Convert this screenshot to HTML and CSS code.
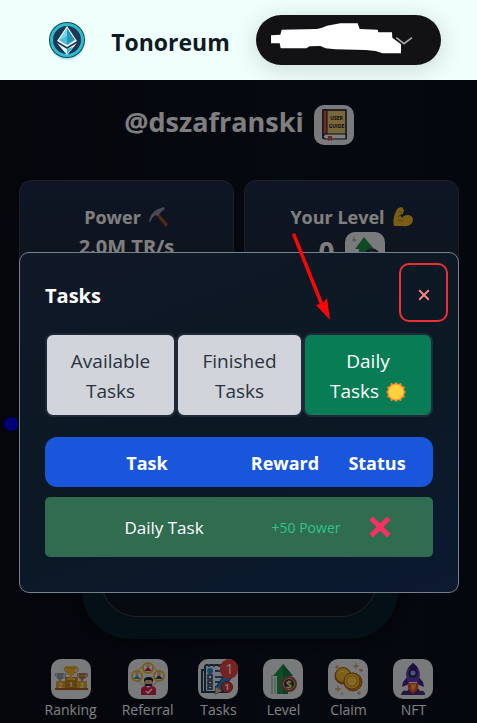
FILE: index.html
```html
<!DOCTYPE html>
<html lang="en">
<head>
<meta charset="utf-8">
<meta name="viewport" content="width=device-width, initial-scale=1">
<title>Tonoreum</title>
<link rel="stylesheet" href="styles.css">
</head>
<body>
<header class="topbar">
  <svg class="logo" viewBox="0 0 36 40" aria-hidden="true">
    <circle cx="18" cy="21" r="17" fill="#b9e9ee"/>
    <circle cx="18" cy="18" r="18" fill="#16425c"/>
    <circle cx="18" cy="18" r="15.5" fill="none" stroke="#2dbdca" stroke-width="3"/>
    <circle cx="18" cy="18" r="13.5" fill="#1b3656"/>
    <path d="M18 4 8 19l10 6 10-6z" fill="#eefcff"/>
    <path d="M18 6v17l-8-5z" fill="#73d8ea"/>
    <path d="M18 6v17l8-5z" fill="#2493b6"/>
    <path d="M18 14v9l-8-5z" fill="#48bfd6"/>
    <path d="M8 21l10 6 10-6-10 12z" fill="#e5f9fc"/>
    <path d="M18 27v5l6-7z" fill="#38b2c9"/>
  </svg>
  <h1 class="brand">Tonoreum</h1>
  <button class="wallet" type="button" aria-label="Wallet">
    <svg viewBox="57 44 555 150" aria-hidden="true">
      <path d="M478 112l23 18 24-18" fill="none" stroke="#a7a7a9" stroke-width="5"/>
      <path d="M102 105l28-2 4-15 106-2 15-4 15-6 40-7h52l6 17 54 2 2 8h41l1 16 26 20v27h-56l-20-7-30-3-91-2-29-3-16-7-32 1-10 6h-77l-3-15h-26z" fill="#fff"/>
    </svg>
  </button>
</header>

<main class="game">
  <div class="user">
    <h2>@dszafranski</h2>
    <a class="tile" href="#guide" aria-label="User guide">
      <svg viewBox="0 0 40 40">
        <path d="M9 5h23v28H9z" fill="#f0d078" stroke="#171b2a" stroke-width="1.5"/>
        <path d="M9 5h4v25H9z" fill="#e05858" stroke="#171b2a"/>
        <path d="M11 29h21v5H11q-4-2 0-5" fill="#fff" stroke="#171b2a" stroke-width="1.2"/>
        <path d="M14 31h4v5l-2-1-2 1z" fill="#e04b59"/>
        <text x="22.500" y="15" class="book-text">USER</text>
        <text x="22.500" y="23" class="book-text">GUIDE</text>
      </svg>
    </a>
  </div>

  <section class="stats">
    <article class="stat">
      <h3>Power
        <svg class="emoji" viewBox="0 0 20 20" aria-hidden="true">
          <path d="M9 6l10 11-2 3L7 8z" fill="#a84e25"/>
          <path d="M0 15C1 7 6 2 15 0l1 2-4 3-3 4-2-1-3 2-3 5z" fill="#9a8fa9"/>
        </svg>
      </h3>
      <p>2.0M TR/s</p>
    </article>
    <article class="stat">
      <h3>Your Level
        <svg class="emoji" viewBox="0 0 20 20" aria-hidden="true">
          <path d="M5 1l4-1 2 3-1 4-3 1 2 3c2-4 10-4 11 1 0 5-4 8-10 7H1C-1 14 2 5 5 1z" fill="#f1bd29"/>
          <path d="M6 4l3 2M7 8l-2 3M5 13l5 1" fill="none" stroke="#bd8119"/>
        </svg>
      </h3>
      <p class="level">0
        <span class="tile">
          <svg viewBox="0 0 40 40">
            <path d="M19 5l10 12h-5v17H14V17h-4z" fill="#1f9448"/>
            <circle cx="27" cy="25" r="7" fill="#e8bd62" stroke="#253057" stroke-width="3"/>
            <path d="M9 5v5M7 8h5" stroke="#98a8a0"/>
          </svg>
        </span>
      </p>
    </article>
  </section>

  <div class="miner">
    <div class="miner-core"></div>
    <span class="orb"></span>
  </div>

  <nav class="menu" aria-label="Game">
    <a href="#ranking"><span class="tile">
      <svg viewBox="0 0 40 40">
        <path d="M5 22h9v-4h13v4h9v8H5z" fill="#e5a82f"/>
        <path d="M14 18h12v12H14z" fill="#c98621"/>
        <path d="M4 29h33v2H4z" fill="#ae651c"/>
        <path d="M14 7h12l-2 7q-2 3-3 3v2h3v2h-8v-2h3v-2q-3-1-4-5z" fill="#f5bf34"/>
        <path d="M13 9h14q0 5-4 5m-6 0q-4-1-4-5" fill="none" stroke="#dc9a20"/>
        <path d="M6 14h7l-1 5-2 2v1H8v-1l-2-2z" fill="#9da4ad"/><path d="M4 15h11q-1 4-4 4H8q-3 0-4-4" fill="none" stroke="#8c939c"/>
        <path d="M28 14h7l-1 5-2 2v1h-2v-1l-2-2z" fill="#c98a66"/><path d="M26 15h11q-1 4-4 4h-3q-3 0-4-4" fill="none" stroke="#a66543"/>
        <text x="9.500" y="29" class="podium">2</text><text x="20" y="28" class="podium">1</text><text x="31" y="29" class="podium">3</text>
      </svg></span>Ranking</a>
    <a href="#referral"><span class="tile">
      <svg viewBox="0 0 40 40">
        <path d="M10 14q1-7 10-8 8 1 10 8M10 22l5 4m15-4-4 4" fill="none" stroke="#e6b23b"/>
        <g fill="#fff" stroke="#eeb92e" stroke-width="2"><circle cx="20" cy="9" r="5"/><circle cx="9" cy="17" r="5"/><circle cx="31" cy="17" r="5"/></g>
        <g fill="#e7b08c"><circle cx="20" cy="7" r="2"/><circle cx="9" cy="15" r="2"/><circle cx="31" cy="15" r="2"/><path d="M16 20h9v7h-9z"/></g>
        <path d="M16.500 12q3.500-7 7 0z" fill="#c91b48"/><path d="M5.500 20q3.500-7 7 0z" fill="#2aa7bd"/><path d="M27.500 20q3.500-7 7 0z" fill="#24436d"/>
        <path d="M16 23q-1-5 5-5 5 0 4 5l-2-2h-5z" fill="#17203d"/><path d="M17 25h7v2h-7z" fill="#242745"/>
        <path d="M13 36v-6q1-3 5-3l2 2 3-2q4 0 5 3v6z" fill="#dd234f"/><path d="M18 32l2 2 4-4" fill="none" stroke="#fff" stroke-width="1.500"/>
      </svg></span>Referral</a>
    <a href="#tasks"><span class="tile">
      <svg viewBox="0 0 40 40">
        <rect x="7" y="6" width="23" height="27" rx="2" fill="#e7f2fa" stroke="#23405f" stroke-width="2"/>
        <path d="M6 11H4v22h17" fill="none" stroke="#23405f" stroke-width="2"/>
        <path d="M11 5v3m5-3v3m5-3v3m5-3v3M17 12h9M17 18h9M17 23h7M17 28h4" stroke="#3d6587" stroke-width="2"/>
        <circle cx="12" cy="12" r="3" fill="#2491ce"/><path d="M10 16h4v4h-4zM10 22h4v3h-4zM10 27h4v3h-4z" fill="#fff" stroke="#23405f" stroke-width="1.5"/>
        <path d="M18 28l9-13 6 4-9 13-7 3z" fill="#278acb" stroke="#1d426c"/><path d="M18 28l6 4-7 3z" fill="#f2c182"/>
        <circle cx="29" cy="28" r="5.500" fill="#e13c3f" stroke="#8f2632"/><text x="29" y="31" class="small-one">1</text>
      </svg><b class="badge">1</b></span>Tasks</a>
    <a href="#level"><span class="tile">
      <svg viewBox="0 0 40 40">
        <path d="M9 16v19M12 19v16" stroke="#75b58a"/>
        <path d="M20 5l10 12h-5v18H14V17h-4z" fill="#239750"/><path d="M20 5l10 12h-5v18h-5z" fill="#177b41"/>
        <circle cx="26" cy="25" r="7" fill="#243353" stroke="#a94c3a" stroke-width="2"/><circle cx="26" cy="25" r="5.500" fill="none" stroke="#edc16a"/><text x="26" y="29" class="dollar">$</text>
      </svg></span>Level</a>
    <a href="#claim"><span class="tile">
      <svg viewBox="0 0 40 40">
        <g stroke="#a95d17"><circle cx="15" cy="17" r="8" fill="#d78b1d"/><circle cx="15" cy="16" r="7.500" fill="#f5be2d"/><circle cx="25" cy="23" r="9" fill="#d78b1d"/><circle cx="24" cy="22" r="8" fill="#ffd33d"/></g>
        <circle cx="24" cy="22" r="5.500" fill="none" stroke="#ef9f22" stroke-width="2"/><path d="M11 14q3-3 6-1M20 21h2m4 0h2M22 25q2 1 4-1" fill="none" stroke="#fff08c"/>
        <path d="M28 4v6m-3-3h6M10 27v6m-3-3h6M9 6v4M7 8h4M33 10v3m-2-2h4M31 32v4m-2-2h4M14 33v3" stroke="#de912d"/>
      </svg></span>Claim</a>
    <a href="#nft"><span class="tile">
      <svg viewBox="0 0 40 40">
        <path d="M8 36q1-6 6-4 2-4 6-2 5-3 7 2 5-1 5 4z" fill="#493078"/>
        <path d="M15 17l-5 6-1 5 7-3zM25 17l5 6 1 5-7-3z" fill="#4b2490"/>
        <path d="M20 4q-7 5-7 12l2 7h10l2-7q0-7-7-12z" fill="#6540b7"/><path d="M20 4q-4 4-5 6h10q-2-4-5-6" fill="#3c2076"/>
        <circle cx="20" cy="14" r="3.500" fill="#8db5ef" stroke="#2f1b63" stroke-width="2"/>
        <path d="M15 24h10q2 6-5 11-7-5-5-11" fill="#ed4a32"/><path d="M18 25h5q0 5-3 7-3-3-2-7" fill="#ffa640"/>
      </svg></span>NFT</a>
  </nav>
  <div class="shade"></div>
</main>

<section class="modal" role="dialog" aria-modal="true" aria-labelledby="modal-title">
  <h2 class="modal-title" id="modal-title">Tasks</h2>
  <button class="close" type="button" aria-label="Close">
    <svg viewBox="0 0 10 10" aria-hidden="true"><path d="M1 1l8 8M9 1L1 9" stroke="#fb8585" stroke-width="1.600"/></svg>
  </button>
  <div class="tabs">
    <button class="tab" type="button">Available Tasks</button>
    <button class="tab" type="button">Finished Tasks</button>
    <button class="tab active" type="button">Daily<br>Tasks
      <svg class="emoji" viewBox="0 0 20 20" aria-hidden="true">
        <path d="M10 0l2 2 3-1 1 3 3 1-1 3 2 2-2 2 1 3-3 1-1 3-3-1-2 2-2-2-3 1-1-3-3-1 1-3-2-2 2-2-1-3 3-1 1-3 3 1z" fill="#f88b2e"/>
        <circle cx="10" cy="10" r="7.500" fill="#ffd23e"/>
      </svg>
    </button>
  </div>
  <table class="tasks">
    <thead><tr><th>Task</th><th>Reward</th><th>Status</th></tr></thead>
    <tbody><tr>
      <td>Daily Task</td><td class="reward">+50 Power</td>
      <td><svg class="status" viewBox="0 0 20 20" role="img" aria-label="Not done"><path d="M2 2l16 16M18 2L2 18" stroke="#fa2f62" stroke-width="4.500"/></svg></td>
    </tr></tbody>
  </table>
</section>

<svg class="pointer" viewBox="0 0 40 90" aria-hidden="true">
  <path d="M3 4l28 70" stroke="#fa0606" stroke-width="3.500" stroke-linecap="round"/>
  <path d="M39 89L25 74l7-2 4-5z" fill="#fa0606"/>
</svg>
</body>
</html>
```

FILE: styles.css
```css
* { box-sizing: border-box; }

body {
  position: relative;
  display: flex;
  flex-direction: column;
  min-height: 100vh;
  margin: 0;
  background: #05080f;
  color: #fff;
  font-family: "Open Sans", "Noto Sans", sans-serif;
}

h1, h2, h3, p { margin: 0; }
svg { display: block; }
button { margin: 0; font: inherit; cursor: pointer; }

.topbar {
  display: flex;
  align-items: center;
  justify-content: space-between;
  height: 80px;
  padding: 4px 36px 0 49px;
  background: #effffc;
  color: #0f1a24;
}
.logo { width: 36px; height: 40px; }
.brand { font-size: 23px; font-weight: 700; line-height: 32px; }
.wallet {
  width: 185px;
  height: 50px;
  margin-bottom: 4px;
  padding: 0;
  border: 0;
  border-radius: 25px;
  background: #121214;
  box-shadow: 0 4px 24px rgba(0, 0, 0, 0.16);
}

.game {
  position: relative;
  display: flex;
  flex: 1;
  flex-direction: column;
  overflow: hidden;
  padding: 25px 18px 2px 19px;
  background: linear-gradient(90deg, #0b0c18, #0a1220 60%, #090e1b);
}
.shade { position: absolute; inset: 0; background: rgba(0, 0, 0, 0.5); }

.user { display: flex; align-items: flex-start; justify-content: center; gap: 10px; }
.user h2 { font-size: 27px; font-weight: 700; line-height: 34px; }
.tile {
  position: relative;
  display: block;
  flex: none;
  width: 40px;
  height: 40px;
  border-radius: 10px;
  background: #f2f4f8;
}

.stats { display: grid; grid-template-columns: 1fr 1fr; gap: 10px; margin-top: 35px; }
.stat {
  height: 120px;
  padding: 21px 10px;
  border: 1px solid #38414c;
  border-radius: 12px;
  background: linear-gradient(180deg, #1e2a49, #1a2a36);
  text-align: center;
}
.stat h3 {
  display: flex;
  align-items: center;
  justify-content: center;
  gap: 8px;
  font-size: 18px;
  font-weight: 700;
  line-height: 30px;
}
.emoji { flex: none; width: 20px; height: 20px; }
.stat p { font-size: 20px; font-weight: 700; line-height: 30px; }
.stat .level { display: flex; align-items: center; justify-content: center; gap: 10px; font-size: 28px; line-height: 40px; }

.miner {
  display: flex;
  flex: 1;
  margin: 20px 61px 0 63px;
  padding: 0 21px 22px 19px;
  border-radius: 48px;
  background: #08202a;
  box-shadow: 0 0 16px #03050a;
}
.miner-core { flex: 1; border: 1px solid #424447; border-radius: 36px; background: #0b1620; }
.orb {
  position: absolute;
  top: 337px;
  left: 4px;
  width: 14px;
  height: 14px;
  border-radius: 50%;
  background: #0000f0;
}

.menu { display: flex; justify-content: center; gap: 25px; margin-top: 20px; }
.menu a {
  display: flex;
  flex-direction: column;
  align-items: center;
  color: #fff;
  font-size: 14px;
  line-height: 22px;
  text-decoration: none;
}
.badge {
  position: absolute;
  top: 0;
  right: 0;
  width: 18px;
  height: 20px;
  border-radius: 10px;
  background: #ef4444;
  font-size: 14px;
  font-weight: 400;
  line-height: 20px;
  text-align: center;
}
.book-text, .podium, .small-one, .dollar { font-weight: 700; text-anchor: middle; }
.book-text { font-size: 5px; fill: #15151c; }
.podium { font-size: 7px; fill: #fff0bc; }
.small-one { font-size: 8px; fill: #fff; }
.dollar { font-size: 11px; fill: #ffd274; }

.modal {
  position: absolute;
  top: 252px;
  right: 18px;
  left: 19px;
  padding: 25px 25px 35px;
  border: 1px solid #777f8b;
  border-radius: 10px;
  background: linear-gradient(160deg, #111827, #0b1924 55%, #0c1932);
}
.modal-title { font-size: 20px; font-weight: 700; line-height: 36px; }
.close {
  position: absolute;
  top: 10px;
  right: 10px;
  display: grid;
  place-items: center;
  width: 49px;
  height: 59px;
  padding: 4px 0 0;
  border: 2px solid #ee2f35;
  border-radius: 10px;
  background: transparent;
}
.close svg { width: 12px; height: 12px; }

.tabs { display: grid; grid-template-columns: 131fr 127fr 130fr; margin: 19px 0 20px; }
.tab {
  padding: 11px 16px 9px;
  border: 2px solid #1f2937;
  border-radius: 8px;
  background: #d1d5db;
  color: #2b323d;
  font-size: 19px;
  line-height: 30px;
}
.tab.active { padding-right: 12px; padding-left: 12px; background: #087d55; color: #fff; }
.tab .emoji { display: inline-block; margin-left: 2px; vertical-align: -4px; }

.tasks, .tasks thead, .tasks tbody { display: block; width: 100%; }
.tasks tr { display: grid; align-items: center; }
.tasks th, .tasks td { padding: 0; text-align: center; }
.tasks thead tr {
  grid-template-columns: 204fr 72fr 112fr;
  height: 50px;
  padding-top: 2px;
  border-radius: 12px;
  background: #1a56db;
  font-size: 18px;
}
.tasks tbody tr {
  grid-template-columns: 182fr 102fr 46fr;
  height: 60px;
  margin-top: 10px;
  padding: 0 30px 0 28px;
  border-radius: 5px;
  background: #2f6c50;
  font-size: 17px;
}
.tasks .reward { color: #31c48d; font-size: 14px; }
.status { width: 22px; height: 22px; margin: 0 auto; }

.pointer { position: absolute; top: 231px; left: 291px; width: 40px; height: 90px; }
```
